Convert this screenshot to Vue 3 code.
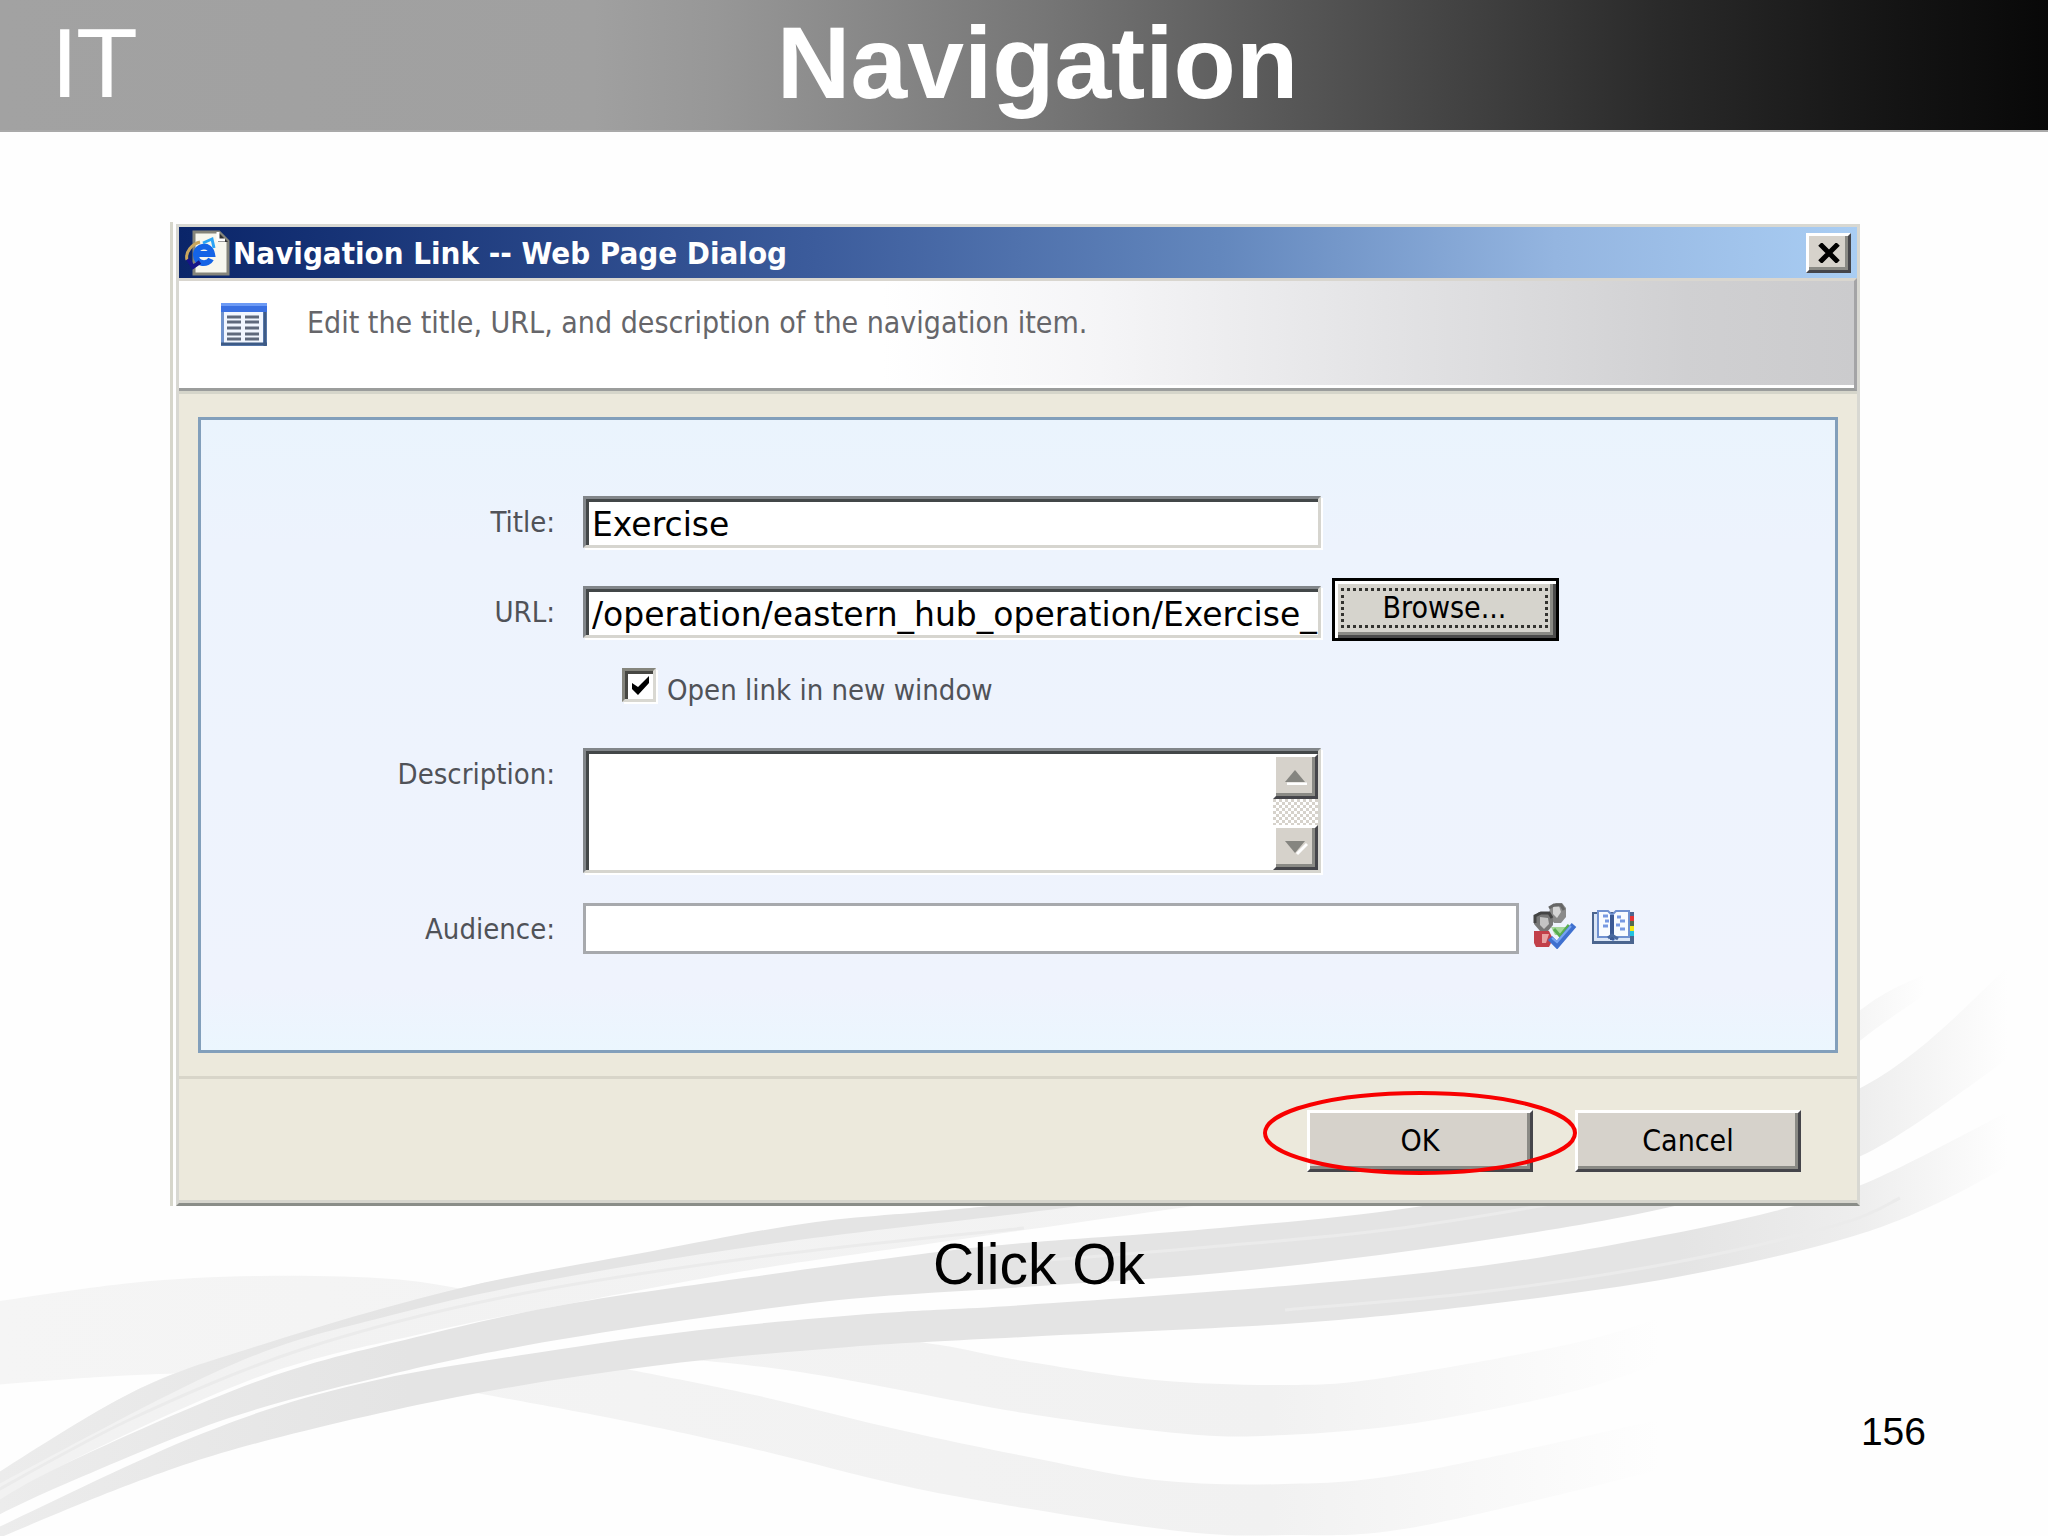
<script setup>
import { ref } from 'vue'

const title = ref('Exercise')
const url = ref('/operation/eastern_hub_operation/Exercise_')
const newWindow = ref(true)
const description = ref('')
const audience = ref('')

// Each ribbon is an upper edge (left to right) and a lower edge (left to right).
const ribbons = [
  {
    fill: 'url(#pale)',
    top: [[-20, 1304], [131, 1283], [261, 1276], [392, 1279], [480, 1292]],
    bottom: [[-20, 1386], [100, 1377], [190, 1373], [260, 1372], [330, 1350]],
  },
  {
    fill: 'url(#pale)',
    top: [[860, 1335], [940, 1345], [1024, 1361], [1155, 1380], [1285, 1385], [1383, 1378], [1579, 1342], [1680, 1310]],
    bottom: [[640, 1355], [800, 1372], [1024, 1413], [1187, 1434], [1285, 1435], [1416, 1423], [1579, 1390], [1680, 1355]],
  },
  {
    fill: 'url(#pale)',
    top: [[580, 1360], [750, 1394], [900, 1430], [1024, 1456], [1155, 1480], [1285, 1484], [1416, 1472], [1680, 1415]],
    bottom: [[460, 1390], [620, 1420], [750, 1448], [900, 1485], [1024, 1508], [1187, 1532], [1285, 1535], [1416, 1527], [1680, 1465]],
  },
  {
    fill: 'url(#haze)',
    top: [[-20, 1486], [131, 1393], [261, 1345], [457, 1289], [653, 1253], [816, 1224], [980, 1207], [1200, 1190]],
    bottom: [[-20, 1514], [65, 1464], [261, 1376], [425, 1333], [568, 1304], [751, 1270], [914, 1246], [1200, 1205]],
  },
  {
    fill: 'url(#mist)',
    top: [[-20, 1484], [131, 1393], [261, 1345], [457, 1289], [653, 1251], [816, 1222], [980, 1207], [1200, 1180]],
    bottom: [[-20, 1494], [229, 1366], [392, 1315], [555, 1279], [784, 1242], [1024, 1213], [1200, 1190]],
  },
  {
    fill: 'url(#mist)',
    top: [[-20, 1512], [65, 1464], [261, 1380], [425, 1335], [568, 1304], [751, 1277], [914, 1255], [1024, 1243], [1220, 1228], [1416, 1207], [1640, 1165], [1866, 1085], [2010, 965]],
    bottom: [[-20, 1524], [65, 1484], [229, 1418], [392, 1374], [523, 1346], [686, 1320], [849, 1299], [1024, 1287], [1220, 1273], [1416, 1250], [1612, 1219], [1760, 1185], [1873, 1150], [2020, 1050]],
  },
  {
    fill: 'url(#mist)',
    top: [[-20, 1536], [196, 1436], [359, 1384], [555, 1350], [718, 1328], [882, 1313], [1024, 1305], [1285, 1286], [1481, 1266], [1644, 1239], [1775, 1211], [1873, 1180], [2030, 1100]],
    bottom: [[-20, 1546], [131, 1484], [261, 1442], [457, 1397], [653, 1366], [849, 1347], [1024, 1337], [1285, 1324], [1481, 1305], [1677, 1277], [1840, 1240], [1938, 1203], [2040, 1148]],
  },
  {
    fill: 'url(#haze)',
    top: [[1780, 1080], [1870, 1003], [1940, 968]],
    bottom: [[1780, 1105], [1870, 1033], [1950, 978]],
  },
]

const strands = [
  [[-20, 1500], [131, 1419], [300, 1350], [500, 1298], [751, 1258], [1024, 1228]],
  [[1024, 1262], [1220, 1246], [1416, 1226], [1640, 1185], [1840, 1122]],
  [[1285, 1310], [1481, 1292], [1677, 1262], [1840, 1224], [1900, 1198]],
]

// Smooth curve through a run of points.
function curve(points) {
  let d = ''
  for (let i = 0; i < points.length - 1; i++) {
    const p0 = points[i - 1] || points[i]
    const p1 = points[i]
    const p2 = points[i + 1]
    const p3 = points[i + 2] || p2
    d += ` C${p1[0] + (p2[0] - p0[0]) / 6} ${p1[1] + (p2[1] - p0[1]) / 6} ${p2[0] - (p3[0] - p1[0]) / 6} ${p2[1] - (p3[1] - p1[1]) / 6} ${p2[0]} ${p2[1]}`
  }
  return d
}

function ribbonPath({ top, bottom }) {
  const back = [...bottom].reverse()
  return `M${top[0]}${curve(top)} L${back[0]}${curve(back)} Z`
}
</script>

<template>
  <div class="slide">
    <svg class="waves" viewBox="0 0 2048 1536" preserveAspectRatio="none" aria-hidden="true">
      <defs>
        <linearGradient id="mist" gradientUnits="userSpaceOnUse" x1="0" y1="0" x2="2048" y2="0">
          <stop offset="0" stop-color="#ececec" />
          <stop offset="0.2" stop-color="#e4e4e4" />
          <stop offset="0.82" stop-color="#e4e4e4" />
          <stop offset="0.91" stop-color="#eeeeee" />
          <stop offset="0.98" stop-color="#fefefe" />
        </linearGradient>
        <linearGradient id="haze" gradientUnits="userSpaceOnUse" x1="0" y1="0" x2="2048" y2="0">
          <stop offset="0" stop-color="#f2f2f2" />
          <stop offset="0.9" stop-color="#f3f3f3" />
          <stop offset="0.94" stop-color="#fefefe" />
        </linearGradient>
        <linearGradient id="pale" gradientUnits="userSpaceOnUse" x1="0" y1="0" x2="2048" y2="0">
          <stop offset="0" stop-color="#f5f5f5" />
          <stop offset="0.62" stop-color="#f1f1f1" />
          <stop offset="0.81" stop-color="#fefefe" />
        </linearGradient>
      </defs>
      <path v-for="(r, i) in ribbons" :key="'r' + i" :d="ribbonPath(r)" :fill="r.fill" />
      <path v-for="(s, i) in strands" :key="'s' + i" :d="`M${s[0]}${curve(s)}`" fill="none" stroke="#ebebeb" stroke-width="3" />
    </svg>

    <header class="banner">
      <span class="logo">IT</span>
      <h1>Navigation</h1>
    </header>

    <main>
      <section class="frame" role="dialog" aria-labelledby="dialog-title">
        <div class="dialog">
          <div class="titlebar">
            <svg class="ie" viewBox="0 0 46 46" aria-hidden="true">
              <path d="M10 2h25l9 9v33H10z" fill="#f7f7ee" stroke="#85857b" stroke-width="3" />
              <path d="M34 2v10h10z" fill="#333" />
              <path d="M34 2v8h7" fill="none" stroke="#fff" stroke-width="3" />
              <path d="M27 29c-3 6-15 6-15-4s14-12 16-1H14" fill="none" stroke="#1464e6" stroke-width="6" />
              <path d="M3 30C1 22 8 14 16 12" fill="none" stroke="#c9a65d" stroke-width="3" />
              <path d="M19 13l9-4 2 9" fill="none" stroke="#2ba4f5" stroke-width="3" />
              <path d="M4 29l5 8 7-5" fill="none" stroke="#161488" stroke-width="4" />
            </svg>
            <h2 id="dialog-title">Navigation Link -- Web Page Dialog</h2>
            <button type="button" class="close" aria-label="Close">
              <svg viewBox="0 0 24 20" aria-hidden="true"><path d="M3 1l18 18M21 1L3 19" stroke="#000" stroke-width="5" /></svg>
            </button>
          </div>

          <div class="intro">
            <svg class="list" viewBox="0 0 46 43" aria-hidden="true">
              <rect width="46" height="43" fill="#6f92cc" />
              <rect width="46" height="9" fill="#3a70e2" />
              <rect width="46" height="3" fill="#6c9af5" />
              <rect x="3" y="9" width="39" height="31" fill="#f1f6ff" />
              <path d="M44 9v34M0 41h46" stroke="#3d5a85" stroke-width="3" />
              <path d="M6 14h14M24 14h14M6 19h14M24 19h14M6 25h14M24 25h14M6 31h14M24 31h14M6 36h14M24 36h14" stroke="#5f697c" stroke-width="3" />
            </svg>
            <p>Edit the title, URL, and description of the navigation item.</p>
          </div>

          <form class="body" @submit.prevent>
            <div class="panel">
              <label for="f-title">Title:</label>
              <div class="cell"><input id="f-title" v-model="title" class="sunken" type="text" /></div>

              <label for="f-url">URL:</label>
              <div class="cell">
                <input id="f-url" v-model="url" class="sunken" type="text" />
                <button type="button" class="browse"><span>Browse...</span></button>
              </div>

              <div class="check">
                <input id="f-new" v-model="newWindow" type="checkbox" />
                <label for="f-new">Open link in new window</label>
              </div>

              <label for="f-desc">Description:</label>
              <div class="cell">
                <div class="area">
                  <textarea id="f-desc" v-model="description"></textarea>
                  <div class="scroll">
                    <button type="button" aria-label="Scroll up">
                      <svg viewBox="0 0 24 16" aria-hidden="true"><path d="M3 15h20" stroke="#fff" stroke-width="3" /><path d="M11 1L1 13h20z" fill="#858580" /></svg>
                    </button>
                    <button type="button" aria-label="Scroll down">
                      <svg viewBox="0 0 24 16" aria-hidden="true"><path d="M13 14L23 4" stroke="#fff" stroke-width="3" /><path d="M11 13L1 1h20z" fill="#858580" /></svg>
                    </button>
                  </div>
                </div>
              </div>

              <label for="f-aud">Audience:</label>
              <div class="cell">
                <input id="f-aud" v-model="audience" class="flat" type="text" />
                <button type="button" class="tool" aria-label="Check names">
                  <svg viewBox="0 0 44 46" aria-hidden="true">
                    <path d="M18 24h18v8H22z" fill="#a5d69a" />
                    <path d="M21 26l6 7 9-11" fill="none" stroke="#58ad50" stroke-width="3" />
                    <path d="M1 28h15l4 8-4 8H3l-2-4z" fill="#c2404a" />
                    <path d="M9 31h7l-3 9h-4z" fill="#e8a3a3" />
                    <path d="M17 4l6-4h6l4 5v9l-5 6h-7l-5-7z" fill="#8a8a8a" />
                    <path d="M20 4l6-1 2 6-4 6-4-4z" fill="#d5d5d5" />
                    <path d="M16 5l5-3h7l3 5" fill="none" stroke="#666" stroke-width="3" />
                    <path d="M1 14l5-5h9l5 5v8l-5 6H7l-6-7z" fill="#777" />
                    <path d="M7 14l8 1 1 6-5 5-4-4z" fill="#c4c4c4" />
                    <path d="M2 20v-7l6-3h8l3 5" fill="none" stroke="#444" stroke-width="3" />
                    <path d="M17 35l7 7 17-20" fill="none" stroke="#3f70cf" stroke-width="6" />
                    <path d="M19 35l5 4 14-16" fill="none" stroke="#78a4f2" stroke-width="2" />
                  </svg>
                </button>
                <button type="button" class="tool" aria-label="Browse address book">
                  <svg viewBox="0 0 44 46" aria-hidden="true">
                    <path d="M1 9h42v32H1z" fill="#4b658f" />
                    <path d="M3 11h3v24h33v3H3z" fill="#dbe6f6" />
                    <path d="M7 8h10l4 4 4-4h13v26H26l-4 3-4-3H7z" fill="#f8fbff" stroke="#7091d0" stroke-width="2" />
                    <path d="M21 12v25" stroke="#3c5a94" stroke-width="4" />
                    <path d="M12 13h5M14 18h4M12 23h5M26 14h4M29 18h5M25 22h4M29 26h5" stroke="#7799e2" stroke-width="3" />
                    <path d="M17 35l4-3 6 4" fill="none" stroke="#49699f" stroke-width="3" />
                    <path d="M39 13h4v5h-4z" fill="#e53434" />
                    <path d="M39 18h4v5h-4z" fill="#526a50" />
                    <path d="M39 23h4v5h-4z" fill="#f3e713" />
                    <path d="M39 28h4v5h-4z" fill="#21c2de" />
                  </svg>
                </button>
              </div>
            </div>

            <footer class="actions">
              <div class="marked">
                <button type="submit" class="raised">OK</button>
                <svg class="ring" viewBox="0 0 314 84" aria-hidden="true">
                  <ellipse cx="157" cy="42" rx="155" ry="40" fill="none" stroke="#f80000" stroke-width="4" />
                </svg>
              </div>
              <button type="button" class="raised">Cancel</button>
            </footer>
          </form>
        </div>
      </section>

      <p class="caption">Click Ok</p>
    </main>

    <div class="page-number">156</div>
  </div>
</template>

<style>
body {
  background: #fff;
}
</style>

<style scoped>
* {
  box-sizing: border-box;
}

.slide {
  --ui: "DejaVu Sans Condensed", "DejaVu Sans", sans-serif;
  position: relative;
  min-height: 100vh;
  overflow: hidden;
  background: #fefefe;
  color: #000;
  font-family: "Liberation Sans", Arial, sans-serif;
}

.waves {
  position: absolute;
  inset: 0;
  width: 100%;
  height: 100%;
}

.banner {
  position: relative;
  display: grid;
  grid-template-columns: 1fr auto 1fr;
  align-items: center;
  height: 132px;
  padding: 0 24px 0 51px;
  border-bottom: 2px solid #a9a9a9;
  background: linear-gradient(90deg, #a2a2a2 0, #a0a0a0 29%, #979797 35%, #767676 51%, #5c5c5c 61%, #484848 69%, #2a2a2a 81%, #151515 92%, #080808 100%);
  color: #fff;
}

.logo {
  font-family: "DejaVu Sans", sans-serif;
  font-size: 93px;
  line-height: 130px;
}

h1 {
  margin: 0;
  font-size: 102px;
  line-height: 124px;
  padding-bottom: 4px;
}

main {
  position: relative;
  padding: 90px 188px 0 170px;
}

.frame {
  padding: 2px 0 0 3px;
  border-left: 3px solid #d6d6cb;
}

.dialog {
  border: 3px solid #d8d8d2;
  border-bottom-color: #8a8d88;
  background: #ece9dc;
}

.titlebar {
  display: flex;
  align-items: center;
  height: 51px;
  padding: 0 6px 0 5px;
  background: linear-gradient(90deg, #0a2569 0, #3c5c9c 38%, #6387bd 62%, #94b5e0 82%, #a9cdf3 100%);
  color: #fff;
}

.ie {
  width: 46px;
  height: 46px;
}

h2 {
  flex: 1;
  margin: 0 0 0 3px;
  font: bold 31px/48px var(--ui);
}

button {
  padding: 0;
  border: 0;
  font: 30px/40px var(--ui);
  color: #000;
}

.close,
.raised,
.scroll button {
  border: 3px solid;
  border-color: #fff #45454a #45454a #fff;
  box-shadow: inset -3px -3px #8a8a85;
  background: #d6d2cb;
}

.close {
  display: grid;
  place-items: center;
  width: 45px;
  height: 40px;
}

.close svg {
  width: 24px;
  height: 20px;
}

.intro {
  display: flex;
  align-items: flex-start;
  gap: 40px;
  height: 113px;
  padding: 22px 0 0 42px;
  border: solid;
  border-width: 3px 3px 3px 0;
  border-color: #d9d6cf #a4a4a6 #9b9d9c;
  background: linear-gradient(90deg, #fff 42%, #f5f5f7 55%, #e3e3e5 72%, #d0d0d2 90%, #cbcbcd 100%);
  box-shadow: inset 0 -3px #fff;
}

.list {
  width: 46px;
  height: 43px;
}

.intro p {
  margin: 0;
  color: #66666a;
  font: 30px/40px var(--ui);
}

.body {
  border-top: 3px solid #d5d5ca;
}

.panel {
  display: grid;
  grid-template-columns: 354px 1fr;
  column-gap: 28px;
  margin: 23px 19px;
  padding: 76px 0 95px;
  border: 3px solid #829fbb;
  background: linear-gradient(#eaf4fd 0, #edf3fd 20%, #eff3fd 90%, #ebf6fe 100%);
}

label {
  color: #505258;
  text-align: right;
  font: 29px/52px var(--ui);
}

.cell {
  display: flex;
  align-items: flex-start;
}

.sunken,
.area {
  width: 738px;
  border: 3px solid;
  border-color: #82868a #d6d5cf #d6d5cf #82868a;
  border-radius: 0;
  outline: 0;
  background: #fff;
  box-shadow: inset 3px 3px #434748, 2px 2px #fff;
}

.sunken {
  height: 52px;
  margin-bottom: 38px;
  padding: 4px 0 0 6px;
  color: #000;
  font: 33px/40px "DejaVu Sans", sans-serif;
}

.browse {
  width: 227px;
  height: 63px;
  margin: -8px 0 0 11px;
  padding: 5px 8px 8px 6px;
  border: 3px solid #000;
  background: #d6d4cd;
  box-shadow: inset 3px 3px #fff, inset -3px -3px #4b4b4b, inset -6px -6px #8a8a85;
}

.browse span {
  display: block;
  height: 40px;
  border: 3px dotted #33332f;
  line-height: 34px;
}

.check {
  grid-column: 2;
  display: flex;
  gap: 11px;
  height: 80px;
  margin-top: -8px;
  padding-left: 39px;
}

.check input {
  appearance: none;
  width: 34px;
  height: 34px;
  margin: 0;
  border: 3px solid;
  border-color: #85857d #d9d8d2 #d9d8d2 #85857d;
  box-shadow: inset 3px 3px #474743, 2px 2px #fff;
  background: #fff;
}

.check input:checked {
  background: #fff url("data:image/svg+xml,%3Csvg xmlns='http://www.w3.org/2000/svg' viewBox='0 0 28 28'%3E%3Cpath d='M7 12v6l6 6L24 12V5L13 16z'/%3E%3C/svg%3E");
}

.check label {
  line-height: 44px;
}

.area {
  display: flex;
  height: 125px;
  margin-bottom: 30px;
  padding: 3px 0 0 3px;
}

textarea {
  flex: 1;
  min-width: 0;
  border: 0;
  outline: 0;
  resize: none;
  background: transparent;
  font: 33px/40px "DejaVu Sans", sans-serif;
}

.scroll {
  display: flex;
  flex-direction: column;
  justify-content: space-between;
  width: 45px;
  background: repeating-conic-gradient(#d6d2cb 0 25%, #fff 0 50%) 0 0 / 6px 6px;
}

.scroll button {
  display: grid;
  place-items: center;
  height: 45px;
}

.scroll svg {
  width: 24px;
  height: 16px;
}

.flat {
  width: 936px;
  height: 51px;
  border: 3px solid #a7a9ad;
  border-radius: 0;
  outline: 0;
  background: #fff;
  font: 33px/40px "DejaVu Sans", sans-serif;
}

.tool {
  width: 44px;
  height: 46px;
  margin-left: 14px;
  background: none;
}

.tool svg {
  display: block;
}

.actions {
  display: flex;
  justify-content: flex-end;
  gap: 42px;
  height: 127px;
  padding: 31px 56px 0 0;
  border-top: 3px solid #d8d5c9;
  border-bottom: 3px solid #d6d5cd;
}

.raised {
  width: 226px;
  height: 62px;
}

.marked {
  position: relative;
}

.ring {
  position: absolute;
  top: -19px;
  left: -44px;
  width: 314px;
  height: 84px;
  pointer-events: none;
}

.caption {
  margin: 23px 0 0 48px;
  text-align: center;
  font-size: 57px;
  line-height: 70px;
}

.page-number {
  position: absolute;
  right: 122px;
  bottom: 81px;
  font-size: 39px;
  line-height: 46px;
}
</style>
